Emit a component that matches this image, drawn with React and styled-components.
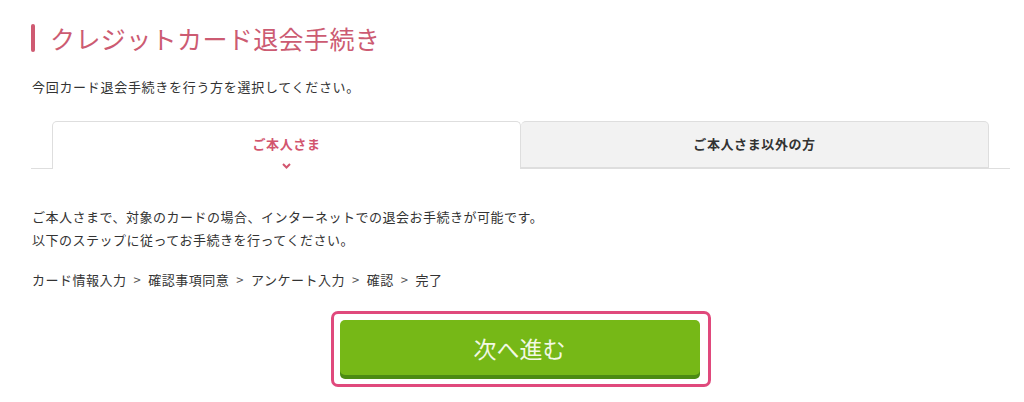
import React from "react";
import { useState } from "react";
import styled, { createGlobalStyle } from "styled-components";

const GlobalStyle = createGlobalStyle`
  * {
    box-sizing: border-box;
  }
  body {
    margin: 0;
    background: #fff;
    font-family: "Noto Sans CJK JP", "Noto Sans", sans-serif;
    color: #333;
  }
`;

const steps = ["カード情報入力", "確認事項同意", "アンケート入力", "確認", "完了"];

function App() {
  const [tab, setTab] = useState(0);

  return (
    <>
      <GlobalStyle />
      <Container>
        <Title>
          <TitleBar />
          <TitleText>クレジットカード退会手続き</TitleText>
        </Title>
        <Lead>今回カード退会手続きを行う方を選択してください。</Lead>
        <Tabs>
          <Tab active={tab === 0} onClick={() => setTab(0)}>
            ご本人さま
            {tab === 0 && (
              <Chevron width="9" height="6" viewBox="0 0 9 6">
                <path d="M1 1l3.5 3.5L8 1" fill="none" stroke="#d2566f" strokeWidth="2" />
              </Chevron>
            )}
          </Tab>
          <Tab active={tab === 1} onClick={() => setTab(1)}>
            ご本人さま以外の方
          </Tab>
        </Tabs>
        <Body>
          ご本人さまで、対象のカードの場合、インターネットでの退会お手続きが可能です。
          <br />
          以下のステップに従ってお手続きを行ってください。
        </Body>
        <Steps>
          {steps.map((step, i) => (
            <React.Fragment key={step}>
              {i > 0 && <Sep>&gt;</Sep>}
              {step}
            </React.Fragment>
          ))}
        </Steps>
        <ButtonFrame>
          <NextButton type="button">次へ進む</NextButton>
        </ButtonFrame>
      </Container>
    </>
  );
}

export default App;

const Container = styled.div`
  padding: 24px 14px 0 31px;
`;

const Title = styled.h1`
  display: flex;
  align-items: center;
  gap: 15px;
  margin: 0;
  height: 28px;
`;

const TitleBar = styled.span`
  width: 4px;
  height: 28px;
  border-radius: 2px;
  background: #cf5a72;
`;

const TitleText = styled.span`
  font-size: 25px;
  line-height: 28px;
  letter-spacing: 0.4px;
  font-weight: normal;
  color: #cc5b72;
`;

const Lead = styled.p`
  margin: 25px 0 0 1px;
  font-size: 13px;
  line-height: 20px;
  letter-spacing: 0.7px;
  color: #333;
`;

const Tabs = styled.div`
  display: flex;
  margin-top: 24px;
  padding: 0 21px;
  height: 48px;
  border-bottom: 1px solid #dedede;
`;

const Tab = styled.div`
  flex: 1;
  display: flex;
  flex-direction: column;
  align-items: center;
  padding-top: 12px;
  height: ${(p) => (p.active ? "48px" : "47px")};
  border: 1px solid #dedede;
  border-bottom: ${(p) => (p.active ? "none" : "1px solid #dedede")};
  border-radius: 5px 5px 0 0;
  background: ${(p) => (p.active ? "#fff" : "#f2f2f2")};
  color: ${(p) => (p.active ? "#d2566f" : "#333")};
  font-size: 13px;
  line-height: 20px;
  letter-spacing: 0.6px;
  font-weight: bold;
  cursor: pointer;
  & + & {
    border-left: none;
  }
`;

const Chevron = styled.svg`
  margin-top: 9px;
`;

const Body = styled.p`
  margin: 36px 0 0 1px;
  font-size: 13px;
  line-height: 23px;
  letter-spacing: 0.5px;
  color: #333;
`;

const Steps = styled.p`
  margin: 19px 0 0 1px;
  font-size: 13px;
  line-height: 20px;
  letter-spacing: 0.5px;
  color: #333;
`;

const Sep = styled.span`
  margin: 0 7px;
  color: #555;
`;

const ButtonFrame = styled.div`
  width: 380px;
  margin: 21px auto 0;
  padding: 6px 8px 5px 6px;
  border: 3px solid #e0497c;
  border-radius: 7px;
`;

const NextButton = styled.button`
  display: block;
  width: 100%;
  height: 55px;
  margin-bottom: 4px;
  border: none;
  border-radius: 5px;
  background: #76b817;
  box-shadow: 0 4px 0 #4b8b12;
  color: #f2f8e4;
  font-family: "Noto Sans CJK JP", sans-serif;
  font-size: 23px;
  cursor: pointer;

  &:hover {
    background: #6dad12;
  }
`;
